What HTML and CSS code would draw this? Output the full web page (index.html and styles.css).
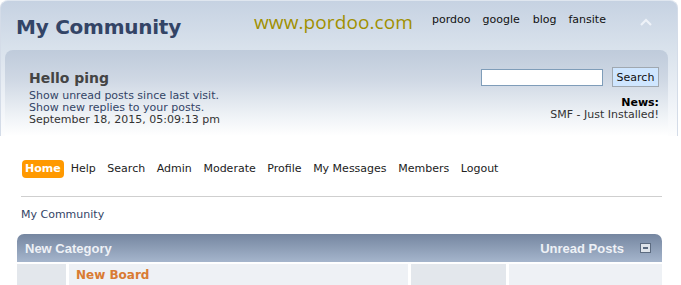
FILE: index.html
```html
<!DOCTYPE html>
<html>
<head>
<meta charset="utf-8">
<link rel="stylesheet" href="styles.css">
</head>
<body>
<div class="header">
  <div class="top">
    <h1 class="forumtitle">My Community</h1>
    <span class="site">www.pordoo.com</span>
    <nav class="toplinks">
      <a>pordoo</a><a>google</a><a>blog</a><a>fansite</a>
    </nav>
    <svg class="upshrink" width="14" height="10" viewBox="0 0 14 10"><path d="M2 8 L7 3 L12 8" fill="none" stroke="#eef2f8" stroke-width="2.2"/></svg>
  </div>
  <div class="upper">
    <div class="user">
      <div class="hello">Hello ping</div>
      <div class="ulink">Show unread posts since last visit.</div>
      <div class="ulink">Show new replies to your posts.</div>
      <div class="date">September 18, 2015, 05:09:13 pm</div>
    </div>
    <div class="newsarea">
      <form class="search">
        <input type="text" class="sinput">
        <button type="button" class="sbtn">Search</button>
      </form>
      <div class="news"><b>News:</b></div>
      <div class="newsline">SMF - Just Installed!</div>
    </div>
  </div>
</div>
<div class="content">
  <nav class="menu">
    <a class="active">Home</a><a>Help</a><a>Search</a><a>Admin</a><a>Moderate</a><a>Profile</a><a>My Messages</a><a>Members</a><a>Logout</a>
  </nav>
  <div class="rule"></div>
  <div class="crumb">My Community</div>
  <div class="catbg">
    <span>New Category</span>
    <span class="right">Unread Posts <span class="collapse"></span></span>
  </div>
  <div class="board">
    <div class="c icon"></div>
    <div class="c info">New Board</div>
    <div class="c stats"></div>
    <div class="c last"></div>
  </div>
</div>
</body>
</html>
```
FILE: styles.css
```css
* { box-sizing: border-box; }
body {
  margin: 0;
  background: #fff;
  font-family: "DejaVu Sans", Verdana, sans-serif;
  font-size: 11px;
  color: #222;
  width: 681px;
  height: 285px;
  overflow: hidden;
}
.header {
  width: 678px;
  border-radius: 8px 8px 0 0;
  background: linear-gradient(#c6d2e2 0, #d9e2ec 48px, #eef2f7 100px, #ffffff 140px);
  border-top: 1px solid #dfe6ef;
  border-left: 1px solid #d4dce8;
  border-right: 1px solid #d4dce8;
}
.top {
  height: 49px;
  display: flex;
  align-items: center;
  padding-left: 15px;
  position: relative;
}
.forumtitle {
  margin: 0;
  font-size: 20px;
  font-weight: bold;
  color: #334466;
  width: 238px;
  padding-top: 3px;
  letter-spacing: -0.25px;
}
.site {
  font-family: "Open Sans", sans-serif;
  font-size: 19px;
  color: #a09000;
  letter-spacing: 0.1px;
  margin-top: -7px;
  width: 178px;
}
.toplinks {
  display: flex;
  margin-top: -13px;
}
.toplinks a { margin-right: 12px; color: #111; }
.toplinks a:nth-child(2) { margin-right: 13px; }
.toplinks a:nth-child(3) { margin-right: 12px; }
.upshrink { position: absolute; left: 638px; top: 16px; }
.upper {
  margin: 0 9px 0 4px;
  height: 86px;
  border-radius: 8px 8px 0 0;
  background: linear-gradient(#bfcbdb 0, #cfd8e4 30px, #eef2f6 65px, #ffffff 86px);
  display: flex;
  justify-content: space-between;
  padding: 19px 9px 0 24px;
}
.hello {
  font-size: 14px;
  font-weight: bold;
  color: #444;
  margin-bottom: 4px;
  margin-top: 1px;
}
.ulink, .date { line-height: 12px; color: #334466; }
.date { color: #333; }
.newsarea { text-align: right; }
.search { display: flex; gap: 9px; align-items: center; margin-bottom: 10px; margin-top: -2px; }
.sinput {
  width: 122px; height: 17px;
  border: 1px solid #7f9db9;
  background: #fff;
  margin: 0; padding: 0;
}
.sbtn {
  width: 47px; height: 20px;
  background: #cfe6ff;
  border: 1px solid #a0a8b0;
  font-family: "DejaVu Sans", Verdana, sans-serif;
  font-size: 11px;
  color: #111;
  padding: 0;
  margin: 0;
}
.news { line-height: 12px; color: #000; }
.newsline { line-height: 12px; color: #333; }
.content { padding: 24px 19px 0 17px; }
.menu { display: flex; align-items: center; padding-left: 5px; height: 19px; margin-top: -1px; }
.menu a { margin-right: 11.6px; color: #222; }
.menu a.active {
  background: #ff9900;
  color: #fff;
  font-weight: bold;
  border-radius: 4px;
  padding: 2px 3px 3px 3px;
  margin-right: 7px;
}
.rule { margin: 18px 0 0 4px; height: 1px; background: #cfcfcf; }
.crumb { padding: 11px 0 0 4px; color: #334466; height: 37px; }
.catbg {
  height: 28px;
  border-radius: 7px 7px 0 0;
  background: linear-gradient(#7586a0, #a5b5cc);
  display: flex;
  justify-content: space-between;
  align-items: center;
  padding: 0 11px 0 8px;
  font-family: "Liberation Sans", Arial, sans-serif;
  font-weight: bold;
  font-size: 13px;
  color: #eef1f6;
}
.right { display: flex; align-items: center; }
.collapse {
  display: inline-block;
  width: 11px; height: 10px;
  margin-left: 16px;
  background: #dfe4ea;
  border: 1px solid #5c6b80;
  position: relative;
}
.collapse::after {
  content: "";
  position: absolute; left: 2px; right: 2px; top: 3px; height: 2px;
  background: #5c6b80;
}
.board { display: flex; gap: 3px; margin-top: 2px; height: 22px; }
.c { height: 22px; }
.icon { width: 49px; background: #e3e7ec; }
.info {
  width: 339px; background: #eef1f5;
  font-family: "DejaVu Sans", Verdana, sans-serif;
  font-weight: bold; font-size: 12px; color: #d97b33;
  padding: 4px 0 0 7px;
}
.stats { width: 95px; background: #e3e7ec; }
.last { flex: 1; background: #eef1f5; }
```
